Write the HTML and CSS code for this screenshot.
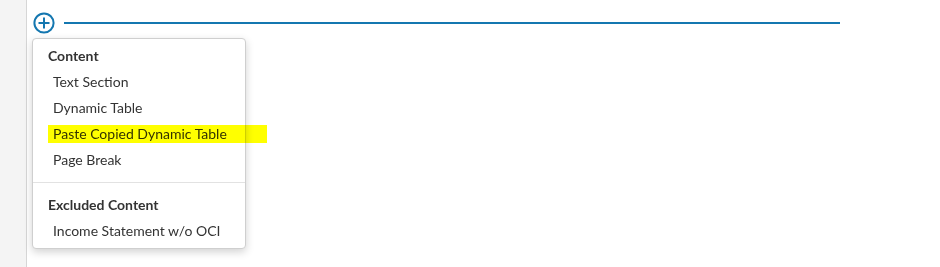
FILE: index.html
```html
<!DOCTYPE html>
<html>
<head>
<meta charset="utf-8">
<link rel="stylesheet" href="styles.css">
</head>
<body>
<div class="page">
  <aside class="sidebar"></aside>
  <main class="main">
    <div class="insert-row">
      <svg class="plus" width="22" height="22" viewBox="0 0 22 22">
        <circle cx="11" cy="11" r="9.6" fill="none" stroke="#1477b0" stroke-width="2"/>
        <path d="M11 5.5 V16.5 M5.5 11 H16.5" stroke="#1477b0" stroke-width="2"/>
      </svg>
      <div class="insert-line"></div>
    </div>
    <div class="menu">
      <div class="menu-header">Content</div>
      <div class="menu-item">Text Section</div>
      <div class="menu-item">Dynamic Table</div>
      <div class="menu-item highlighted">Paste Copied Dynamic Table</div>
      <div class="menu-item">Page Break</div>
      <div class="menu-divider"></div>
      <div class="menu-header">Excluded Content</div>
      <div class="menu-item">Income Statement w/o OCI</div>
    </div>
  </main>
</div>
</body>
</html>
```

FILE: styles.css
```css
html, body {
  margin: 0;
  padding: 0;
  background: #ffffff;
  font-family: Lato, "Open Sans", sans-serif;
  color: #333333;
}
.page {
  display: flex;
  width: 940px;
  height: 267px;
}
.sidebar {
  width: 26px;
  background: #f4f4f4;
  border-right: 1px solid #d6d6d6;
  flex: none;
}
.main {
  flex: 1;
  padding-left: 5px;
}
.insert-row {
  display: flex;
  align-items: center;
  height: 22px;
  margin-top: 12px;
}
.plus {
  display: block;
  margin-left: 1px;
  flex: none;
}
.insert-line {
  margin-left: 9px;
  width: 776px;
  height: 2px;
  background: #1477b0;
}
.menu {
  margin-top: 4px;
  width: 212px;
  padding: 4px 0 4px;
  border: 1px solid #cfcfcf;
  border-radius: 4px;
  background: #ffffff;
  box-shadow: 0 3px 8px rgba(0, 0, 0, 0.18);
  position: relative;
}
.menu-header {
  font-size: 14px;
  font-weight: 700;
  line-height: 26px;
  padding-left: 15px;
  color: #333333;
}
.menu-item {
  font-size: 14px;
  line-height: 26px;
  padding-left: 20px;
  color: #333333;
  position: relative;
}
.menu-divider {
  height: 1px;
  background: #e2e2e2;
  margin: 9px 0 9px;
}
.highlighted::before {
  content: "";
  position: absolute;
  left: 15px;
  top: 4px;
  width: 219px;
  height: 18px;
  background: #ffff00;
  mix-blend-mode: multiply;
}
```
